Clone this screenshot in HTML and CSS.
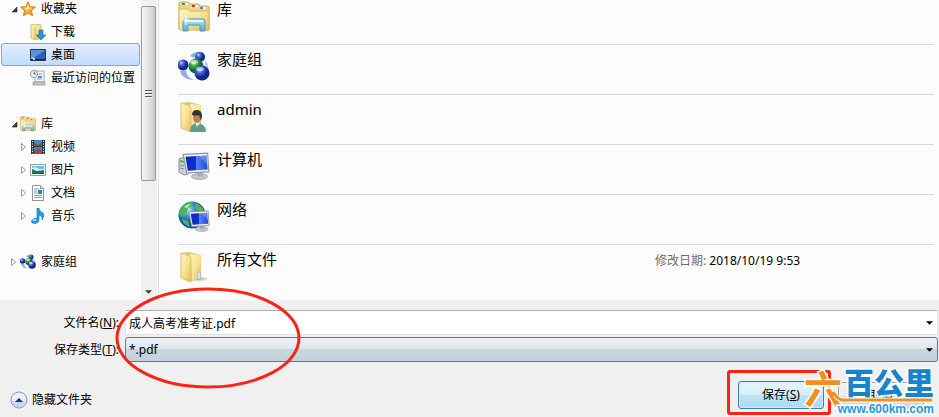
FILE: index.html
```html
<!DOCTYPE html>
<html lang="zh-CN">
<head>
  <meta charset="UTF-8" />
  <meta name="viewport" content="width=device-width, initial-scale=1.0"/>
  <title>另存为</title>
  <link rel="stylesheet" href="styles.css">
</head>
<body>
  <!-- shared icons -->
  <svg class="defs" aria-hidden="true">
    <defs>
      <linearGradient id="paper" x2="1" y2="1"><stop stop-color="#fff6c5"/><stop offset=".5" stop-color="#f8e294"/><stop offset="1" stop-color="#e4bd55"/></linearGradient>
      <linearGradient id="tray" x2="0" y2="1"><stop stop-color="#bceafa"/><stop offset="1" stop-color="#55a8d0"/></linearGradient>
      <linearGradient id="screen" x2="1"><stop stop-color="#1028c0"/><stop offset=".45" stop-color="#0e30d0"/><stop offset=".5" stop-color="#5a83ef"/><stop offset="1" stop-color="#1c46dc"/></linearGradient>
      <radialGradient id="blue" cx=".35" cy=".3"><stop stop-color="#c4d4ff"/><stop offset=".4" stop-color="#4a6bd8"/><stop offset="1" stop-color="#14238f"/></radialGradient>
      <radialGradient id="green" cx=".35" cy=".3"><stop stop-color="#d0f7c4"/><stop offset=".4" stop-color="#48ae50"/><stop offset="1" stop-color="#0c6a24"/></radialGradient>
      <radialGradient id="globe" cx=".35" cy=".3"><stop stop-color="#c4ecfb"/><stop offset=".5" stop-color="#3a93d4"/><stop offset="1" stop-color="#104e96"/></radialGradient>
      <radialGradient id="shade"><stop stop-color="#777" stop-opacity=".6"/><stop offset="1" stop-color="#777" stop-opacity="0"/></radialGradient>
    </defs>
    <symbol id="library" viewBox="0 0 32 32">
      <path d="M1 28V3q0-2 2-2h7l2 2h8l2 2h8q1 0 1 2v22z" fill="#efd584" stroke="#c9a750"/>
      <path d="M4 2h6v2H4zM14 4h6v2h-6zM22 6h6v2h-6z" fill="#fff"/>
      <path d="M4 2h3v2H4z" fill="#18b52c"/><path d="M14 4h3v2h-3z" fill="#cc3826"/><path d="M22 6h3v2h-3z" fill="#2a8ee0"/>
      <path d="M1 8h9l2 2h19v18q0 1-1 1H2q-1 0-1-1z" fill="url(#paper)" stroke="#d6b662"/>
      <path d="M5 30V20q0-2 2-2h18q2 0 2 2v10h-5v-6H10v6z" fill="url(#tray)" stroke="#4d9cc4"/>
      <path d="M7 20h18" stroke="#e6faff" stroke-width="2"/>
      <path d="M8 13l1 5 4 1-4 1-1 5-1-5-4-1 4-1z" fill="#fff" opacity=".8"/>
    </symbol>
    <symbol id="homegroup" viewBox="0 0 32 32">
      <path d="M12 5q4-5 12-4-6 2-8 6zM2 20q2 9 15 9-8-2-9-9z" fill="#8eb2df"/>
      <path d="M26 8q6 5 4 14l-5-4q3-5 1-10z" fill="#b8d0ec"/>
      <circle cx="22" cy="6" r="5" fill="url(#blue)"/>
      <circle cx="5" cy="14" r="5.500" fill="url(#blue)"/>
      <circle cx="18" cy="15" r="7.500" fill="url(#green)"/>
      <circle cx="24" cy="22" r="7.500" fill="url(#blue)"/>
      <ellipse cx="22" cy="18" rx="4" ry="2" fill="#fff" opacity=".5"/>
      <ellipse cx="16" cy="11" rx="4" ry="2" fill="#fff" opacity=".5"/>
    </symbol>
    <symbol id="folder" viewBox="0 0 32 32">
      <ellipse cx="21" cy="28" rx="10" ry="3" fill="url(#shade)"/>
      <path d="M3 2l8-1 12 3v22l-9 4-11-3z" fill="#e3c467"/>
      <path d="M12 3l10 1q1 0 1 1v21l-9 4z" fill="url(#paper)"/>
      <path d="M3 2q9 2 10 5v24L3 27z" fill="url(#paper)" stroke="#dcc06c"/>
      <path d="M20 21h2v7h-2z" fill="#fff" stroke="#79b7d8" stroke-width=".7"/>
    </symbol>
    <symbol id="monitor" viewBox="0 0 24 24">
      <ellipse cx="15" cy="21" rx="7" ry="2.500" fill="#c4cace" stroke="#8b9297" stroke-width=".6"/>
      <path d="M13 16h5v5h-5z" fill="#a7adb3"/>
      <path d="M1 2l21-1 1 16-19 1z" fill="#e9edf0" stroke="#8e979d"/>
      <path d="M3 4l18-1 1 12-17 1z" fill="url(#screen)"/>
      <path d="M11 3l10 0 1 8-8-8z" fill="#fff" opacity=".25"/>
    </symbol>
    <symbol id="closed" viewBox="0 0 8 8"><path d="M1.500.5l4 3.500-4 3.500z" fill="#fff" stroke="#989898"/></symbol>
    <symbol id="open" viewBox="0 0 8 8"><path d="M7 2v5H2z" fill="#404040" stroke="#222" stroke-width=".6"/></symbol>
    <symbol id="down" viewBox="0 0 8 4"><path d="M0 0h8L4 4z" fill="currentColor"/></symbol>
  </svg>

  <div class="dialog">
    <div class="browser">
      <nav class="sidebar">
        <ul class="tree">
          <li class="row"><svg class="arrow"><use href="#open"/></svg>
            <svg class="icon" viewBox="0 0 16 16"><path d="M8 .7l2.100 5 5.300.4-4.100 3.400 1.300 5.300L8 12l-4.600 2.800 1.300-5.300L.6 6.100 5.900 5.700z" fill="#ffad32" stroke="#d97718"/><path d="M8 3l1.400 3.500 3.400.3-5.300 1.700-2 2 .6-2.200-2.400-1.600 3-.2z" fill="#ffe391"/></svg>
            <a href="#">收藏夹</a></li>
          <li class="row child"><svg class="arrow"></svg>
            <svg class="icon" viewBox="0 0 16 16"><path d="M1 1l4-1 6 1v13l-5 2-5-2z" fill="url(#paper)" stroke="#c9a44a" stroke-width=".7"/><path d="M5 3v12" stroke="#d7b75d"/><path d="M9 6h4v5h3l-5 5-5-5h3z" fill="#2c93df" stroke="#1568ae" stroke-width=".6"/></svg>
            <a href="#">下载</a></li>
          <li class="row child selected"><svg class="arrow"></svg>
            <svg class="icon" viewBox="0 0 16 16"><path d="M.5 2.500h15v11H.5z" fill="#2a62be" stroke="#26384d"/><path d="M1 3h14L5 10l-4 2z" fill="#5b92df"/><path d="M1 12h14v1H1z" fill="#16233a"/><path d="M1 10h3v2H1z" fill="#63d3d1"/><path d="M3 11h2v2H3z" fill="#f7d84b"/></svg>
            <a href="#">桌面</a></li>
          <li class="row child"><svg class="arrow"></svg>
            <svg class="icon" viewBox="0 0 16 16"><path d="M5 1h9v11H5z" fill="#f5f8fa" stroke="#a1a8ad"/><path d="M7 4h5M7 9h5" stroke="#79a2c7"/><path d="M8 6h4v2H8z" fill="#4998dc"/><path d="M3 12h12v3H3z" fill="#c6cacd" stroke="#84898d" stroke-width=".7"/><circle cx="4" cy="4" r="3.500" fill="#f6f8fa" stroke="#8a949b"/><path d="M4 2v2h2" fill="none" stroke="#555"/></svg>
            <a href="#">最近访问的位置</a></li>
        </ul>
        <ul class="tree">
          <li class="row"><svg class="arrow"><use href="#open"/></svg><svg class="icon"><use href="#library"/></svg><a href="#">库</a></li>
          <li class="row child"><svg class="arrow"><use href="#closed"/></svg>
            <svg class="icon" viewBox="0 0 16 16"><path d="M1 1h14v14H1z" fill="#263a46"/><path d="M4 1h8v6H4zM4 8h8v7H4z" fill="#3e8dcc"/><path d="M4 3l4 3 4-3v4H4zM4 12l4-3 4 3v3H4z" fill="#a4463b"/><path d="M2.500 2v13M13.500 2v13" stroke="#fff" stroke-dasharray="1 1.500"/></svg>
            <a href="#">视频</a></li>
          <li class="row child"><svg class="arrow"><use href="#closed"/></svg>
            <svg class="icon" viewBox="0 0 16 16"><path d="M.5 2.500h15v11H.5z" fill="#fff" stroke="#8ba0ac"/><path d="M2 4h12v8H2z" fill="#6dbaf0"/><path d="M2 6q4-2 7 1h5v5H2z" fill="#dcf3ff"/><path d="M2 7l5 2 7-1v4H2z" fill="#237a62"/><path d="M2 11h12v1H2z" fill="#175071"/></svg>
            <a href="#">图片</a></li>
          <li class="row child"><svg class="arrow"><use href="#closed"/></svg>
            <svg class="icon" viewBox="0 0 16 16"><path d="M2.500.5h8l3 3v12h-11z" fill="#fff" stroke="#8b979e"/><path d="M10.500.5v3h3" fill="#dce5ea" stroke="#8b979e"/><path d="M4 4h5M4 6h3M4 8h3M4 10.500h8M4 12.500h8" stroke="#7c9db8"/><path d="M8 5h4v4H8z" fill="#2483ce"/></svg>
            <a href="#">文档</a></li>
          <li class="row child"><svg class="arrow"><use href="#closed"/></svg>
            <svg class="icon" viewBox="0 0 16 16"><path d="M7 0h2q0 3 4 5 2 3-1 7 1-4-3-5v5q0 3-4 3.500-4 0-3.500-2.500Q3 10 7 10z" fill="#219ad9" stroke="#1670b0" stroke-width=".6"/><ellipse cx="4.500" cy="12" rx="2" ry="1" fill="#9de0fa"/></svg>
            <a href="#">音乐</a></li>
        </ul>
        <ul class="tree">
          <li class="row"><svg class="arrow"><use href="#closed"/></svg><svg class="icon"><use href="#homegroup"/></svg><a href="#">家庭组</a></li>
        </ul>
      </nav>

      <div class="scrollbar">
        <div class="thumb"><span class="grip"></span></div>
        <svg class="scroll-down"><use href="#down"/></svg>
      </div>

      <main class="files">
        <ul class="file-list">
          <li class="file"><svg class="big-icon"><use href="#library"/></svg><a href="#">库</a></li>
          <li class="file"><svg class="big-icon"><use href="#homegroup"/></svg><a href="#">家庭组</a></li>
          <li class="file">
            <svg class="big-icon" viewBox="0 0 32 32"><use href="#folder"/><path d="M12 31q0-8 6-9l5 1q5 2 5 8z" fill="#5f9f83"/><path d="M17 21l2 5 3-4z" fill="#e8f0e8"/><ellipse cx="19" cy="16" rx="4" ry="6" fill="#bb805b"/><path d="M14 14q0-5 5-5t5 6l-1 5-2-6q-3 1-7 0z" fill="#35332e"/></svg>
            <a href="#">admin</a></li>
          <li class="file">
            <svg class="big-icon" viewBox="0 0 32 32"><path d="M1 8l5-2 4 2v15l-4 1-5-3z" fill="#cdd3d6" stroke="#858e93"/><path d="M2 10l4 1" stroke="#4fbd34" stroke-width="2"/><path d="M2 14l4 1M2 17l4 1" stroke="#7d868c"/><use href="#monitor" x="4" y="1" width="28" height="28"/></svg>
            <a href="#">计算机</a></li>
          <li class="file">
            <svg class="big-icon" viewBox="0 0 32 32"><circle cx="14" cy="14" r="13.500" fill="url(#globe)"/><path d="M5 5q5-5 10-4l-2 5-3 1-1 5-5 4-3-3q0-5 4-8zM17 2q7 2 9 8l-6 1-3-4zM4 18l6 2 2 6q-7-2-8-8z" fill="#51b452"/><path d="M6 6q3-3 7-3l-4 4z" fill="#c6f1a2"/><use href="#monitor" x="10" y="8" width="22" height="24"/></svg>
            <a href="#">网络</a></li>
          <li class="file"><svg class="big-icon"><use href="#folder"/></svg><a href="#">所有文件</a>
            <p class="modified"><span>修改日期:</span> 2018/10/19 9:53</p></li>
        </ul>
      </main>
    </div>

    <form class="save-form">
      <div class="field">
        <label for="fileName">文件名(<u>N</u>):</label>
        <div class="combo">
          <input type="text" id="fileName" value="成人高考准考证.pdf">
          <svg class="combo-arrow"><use href="#down"/></svg>
        </div>
      </div>
      <div class="field">
        <label for="fileType">保存类型(<u>T</u>):</label>
        <div class="combo">
          <select id="fileType"><option>*.pdf</option></select>
          <svg class="combo-arrow"><use href="#down"/></svg>
        </div>
      </div>
      <svg class="ellipse" viewBox="0 0 186 102"><ellipse cx="93" cy="51" rx="91" ry="49" fill="none" stroke="#fb2314" stroke-width="3"/></svg>

      <div class="actions">
        <button type="button" class="toggle">
          <svg class="toggle-icon" viewBox="0 0 18 18"><circle cx="9" cy="9" r="8" fill="#e9eef8" stroke="#8b98b5"/><path d="M2 10h14q-1 6-7 6t-7-6z" fill="#cdd7e8"/><path d="M5 11l4-4 4 4z" fill="#173579"/></svg>
          隐藏文件夹
        </button>
        <div class="save-frame"><button type="button" class="btn save">保存(<u>S</u>)</button></div>
        <button type="button" class="btn cancel">取消</button>
      </div>

      <div class="watermark">
        <span class="mark">六</span>
        <div class="brand">
          <strong class="name">百公里</strong>
          <span class="site">www.600km.com</span>
        </div>
        <svg class="swash" viewBox="0 0 130 50"><path d="M31 29q4 5 8 5h89" fill="none" stroke="#fff" stroke-width="5"/><path d="M29 26q5 8 10 8h89" fill="none" stroke="#f09022" stroke-width="3"/></svg>
      </div>
    </form>
  </div>
</body>
</html>
```
FILE: styles.css
```css
* {
  box-sizing: border-box;
}

body {
  margin: 0;
  font-family: "Noto Sans", "Noto Sans CJK SC", sans-serif;
  font-size: 12px;
  line-height: 20px;
  color: #000;
  background: #f0f0f0;
}

ul,
p {
  margin: 0;
  padding: 0;
  list-style: none;
}

a {
  color: inherit;
  text-decoration: none;
  white-space: nowrap;
}

svg {
  display: block;
  flex-shrink: 0;
}

.defs {
  position: absolute;
  width: 0;
  height: 0;
}

.dialog {
  display: flex;
  flex-direction: column;
  min-height: 100vh;
  overflow: hidden;
}

.browser {
  flex: 1;
  display: flex;
  overflow: hidden;
  background: #fcfcfc;
}

/* folder tree, scrolled a few pixels down */
.sidebar {
  width: 141px;
  margin-top: -3px;
}

.tree {
  margin-bottom: 23px;
}

.tree:last-child {
  margin-bottom: 0;
}

.row {
  display: flex;
  align-items: center;
  height: 23px;
  margin: 0 1px;
  padding-left: 8px;
  border: 1px solid transparent;
  border-radius: 3px;
}

.row.child {
  padding-left: 18px;
}

.row.selected {
  border-color: #7da9da;
  background: linear-gradient(#e2eefd, #c3dcfb);
}

.arrow {
  width: 8px;
  height: 8px;
  margin-right: 2px;
}

.icon {
  width: 16px;
  height: 16px;
  margin-right: 5px;
}

.scrollbar {
  display: flex;
  flex-direction: column;
  justify-content: space-between;
  width: 16px;
  padding: 6px 0;
  background: #f0f0f0;
}

.thumb {
  display: flex;
  align-items: center;
  justify-content: center;
  width: 15px;
  height: 175px;
  border: 1px solid #979797;
  border-radius: 2px;
  background: linear-gradient(90deg, #f5f5f5, #e6e6e7 45%, #c9cacd);
}

.grip {
  width: 7px;
  height: 8px;
  background: repeating-linear-gradient(#555 0 1px, #f4f4f4 1px 2px, transparent 2px 3px);
}

.scroll-down {
  width: 7px;
  height: 4px;
  margin-left: 4px;
  color: #404040;
}

.files {
  flex: 1;
  min-width: 0;
  margin-left: 1px;
  padding: 0 5px 0 19px;
  border-left: 1px solid #d6e5f5;
}

.file-list {
  margin-top: -5px;
}

.file {
  display: flex;
  align-items: flex-start;
  gap: 7px;
  height: 50px;
  padding-top: 6px;
  border-bottom: 1px solid #dadada;
  font-size: 15px;
}

.file:last-child {
  border-bottom: 0;
}

.big-icon {
  width: 32px;
  height: 32px;
}

.file a {
  flex: 1;
  line-height: 16px;
}

.modified {
  flex: 0 0 279px;
  font-size: 12px;
}

.modified span {
  color: #6d6d6d;
}

.save-form {
  position: relative;
  padding: 10px 0 2px;
}

.field {
  display: flex;
  align-items: center;
  gap: 6px;
  margin-bottom: 2px;
}

.field label {
  width: 119px;
  text-align: right;
}

.combo {
  position: relative;
  flex: 1;
  margin-right: 1px;
}

.combo input,
.combo select {
  display: block;
  width: 100%;
  height: 25px;
  padding: 0 20px 0 3px;
  border: 1px solid #e2e3e6;
  border-top-color: #abadb3;
  border-radius: 2px;
  font: inherit;
  color: #000;
  background: #fff;
}

.combo select {
  appearance: none;
  border-color: #5e7b8c;
  border-radius: 3px;
  background: linear-gradient(#edf2f5, #dce6eb 50%, #c8d7df 50%, #c2d3dc);
}

.combo-arrow {
  position: absolute;
  top: 11px;
  right: 5px;
  width: 7px;
  height: 4px;
  pointer-events: none;
}

/* hand-drawn highlight over the two fields */
.ellipse {
  position: absolute;
  left: 115px;
  top: -13px;
  width: 186px;
  height: 102px;
  pointer-events: none;
}

.actions {
  display: flex;
  align-items: center;
  gap: 7px;
  margin-top: 8px;
  padding: 0 15px 0 10px;
}

.toggle {
  display: flex;
  align-items: center;
  gap: 4px;
  margin: 14px auto 0 0;
  padding: 0;
  border: 0;
  font: inherit;
  background: none;
}

.toggle-icon {
  width: 18px;
  height: 18px;
}

.save-frame {
  padding: 8px 4px 3px 8px;
  border: 3px solid #fb2314;
  border-radius: 3px;
}

.btn {
  display: block;
  width: 86px;
  height: 28px;
  padding: 0;
  border: 1px solid #a9a9a9;
  border-radius: 3px;
  font: inherit;
  color: #000;
  background: linear-gradient(#f2f2f2, #ebebeb 50%, #dddddd 50%, #cfcfcf);
}

.save {
  border-color: #3c7fb1;
  box-shadow: inset 0 0 0 1px #c5effb;
  background: linear-gradient(#e8f5fc, #d6eefb 50%, #bfe4f8 50%, #a9d9f2);
}

.cancel {
  margin-top: 6px;
}

.watermark {
  position: absolute;
  right: 5px;
  bottom: 1px;
  display: flex;
  width: 130px;
  height: 50px;
  font-weight: bold;
  paint-order: stroke fill;
  -webkit-text-stroke: 3px #fff;
}

.swash {
  position: absolute;
  left: 0;
  top: 0;
  width: 130px;
  height: 50px;
}

.mark {
  flex: 0 0 38px;
  font-size: 38px;
  line-height: 44px;
  color: #f09022;
}

.brand {
  flex: 1;
  min-width: 0;
  display: flex;
  flex-direction: column;
  align-items: flex-end;
  white-space: nowrap;
}

.name {
  font-size: 30px;
  line-height: 34px;
  color: #1683cc;
}

/* above the orange line */
.site {
  position: relative;
  z-index: 1;
  font-family: "Liberation Sans", sans-serif;
  font-size: 12px;
  line-height: 18px;
  color: #1f96dc;
}
```
